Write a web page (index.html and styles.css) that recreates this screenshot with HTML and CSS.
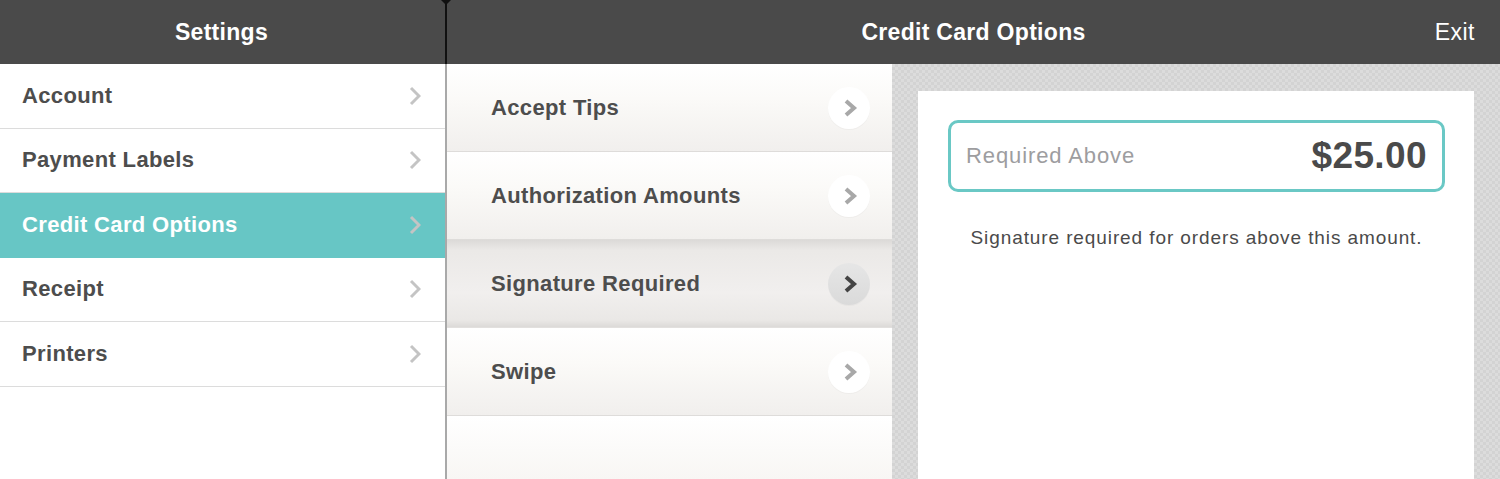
FILE: index.html
```html
<!DOCTYPE html>
<html>
<head>
<meta charset="utf-8">
<link rel="stylesheet" href="styles.css">
</head>
<body>
<div class="app">
  <header class="topbar">
    <div class="topbar-left">Settings</div>
    <div class="topbar-right">
      <span></span>
      <span class="title">Credit Card Options</span>
      <span class="exit">Exit</span>
    </div>
  </header>
  <main class="content">
    <nav class="menu">
      <div class="menu-row">Account<svg class="chev" viewBox="0 0 12 20"><path d="M2 2 L10 10 L2 18" /></svg></div>
      <div class="menu-row">Payment Labels<svg class="chev" viewBox="0 0 12 20"><path d="M2 2 L10 10 L2 18" /></svg></div>
      <div class="menu-row active">Credit Card Options<svg class="chev" viewBox="0 0 12 20"><path d="M2 2 L10 10 L2 18" /></svg></div>
      <div class="menu-row">Receipt<svg class="chev" viewBox="0 0 12 20"><path d="M2 2 L10 10 L2 18" /></svg></div>
      <div class="menu-row">Printers<svg class="chev" viewBox="0 0 12 20"><path d="M2 2 L10 10 L2 18" /></svg></div>
    </nav>
    <section class="options">
      <div class="opt-row"><span>Accept Tips</span><span class="circle"><svg viewBox="0 0 16 20"><path d="M4 3 L12 10 L4 17" /></svg></span></div>
      <div class="opt-row"><span>Authorization Amounts</span><span class="circle"><svg viewBox="0 0 16 20"><path d="M4 3 L12 10 L4 17" /></svg></span></div>
      <div class="opt-row selected"><span>Signature Required</span><span class="circle"><svg viewBox="0 0 16 20"><path d="M4 3 L12 10 L4 17" /></svg></span></div>
      <div class="opt-row"><span>Swipe</span><span class="circle"><svg viewBox="0 0 16 20"><path d="M4 3 L12 10 L4 17" /></svg></span></div>
      <div class="opt-fill"></div>
    </section>
    <section class="detail">
      <div class="card">
        <div class="field">
          <span class="field-label">Required Above</span>
          <span class="field-value">$25.00</span>
        </div>
        <p class="note">Signature required for orders above this amount.</p>
      </div>
    </section>
  </main>
</div>
</body>
</html>
```

FILE: styles.css
```css
* { box-sizing: border-box; }
html, body { margin: 0; padding: 0; }
body {
  width: 1500px;
  height: 479px;
  overflow: hidden;
  font-family: "Liberation Sans", Arial, sans-serif;
  background: #fff;
}
.app { display: flex; flex-direction: column; height: 479px; }

.topbar {
  display: flex;
  height: 64px;
  background: #4a4a4a;
  color: #fff;
  font-size: 23px;
  font-weight: bold;
  letter-spacing: 0.3px;
}
.topbar-left {
  position: relative;
  width: 447px;
  border-right: 2px solid #111;
  display: flex;
  align-items: center;
  justify-content: center;
  padding-right: 2px;
}
.topbar-left::after {
  content: "";
  position: absolute;
  top: 0;
  right: -6px;
  border-left: 5px solid transparent;
  border-right: 5px solid transparent;
  border-top: 5px solid #111;
}
.topbar-right {
  flex: 1;
  display: grid;
  grid-template-columns: 1fr auto 1fr;
  align-items: center;
}
.exit { justify-self: end; padding-right: 25px; font-weight: normal; letter-spacing: 0.5px; }

.content { flex: 1; display: flex; min-height: 0; }

.menu {
  width: 447px;
  border-right: 2px solid #a9a9a9;
  background: #fff;
}
.menu-row {
  height: 64.5px;
  display: flex;
  align-items: center;
  justify-content: space-between;
  padding: 0 24px 0 22px;
  border-bottom: 1px solid #dcdcdc;
  font-size: 22px;
  font-weight: bold;
  letter-spacing: 0.35px;
  color: #4d4d4d;
}
.menu-row.active { background: #67c6c5; color: #fff; border-bottom-color: #67c6c5; }
.chev { width: 12px; height: 20px; }
.chev path { fill: none; stroke: #c4c4c4; stroke-width: 3; }

.options {
  width: 445px;
  display: flex;
  flex-direction: column;
  background: #f6f4f2;
}
.opt-row {
  height: 88px;
  display: flex;
  align-items: center;
  justify-content: space-between;
  padding: 0 22px 0 44px;
  font-size: 22px;
  font-weight: bold;
  letter-spacing: 0.35px;
  color: #4d4d4d;
  background: linear-gradient(#ffffff, #fbfaf8 40%, #f1efed);
  border-bottom: 1px solid #dedcda;
}
.opt-row.selected {
  background: linear-gradient(#dcdad8, #ebe9e7 12%, #f1efee 60%, #eae8e6 92%, #dcdad8);
  border-bottom-color: #e2e0de;
}
.circle {
  width: 42px;
  height: 42px;
  border-radius: 50%;
  background: #ffffff;
  box-shadow: 0 1px 1px rgba(0, 0, 0, 0.03);
  display: flex;
  align-items: center;
  justify-content: center;
}
.circle svg { width: 16px; height: 20px; margin-left: 2px; }
.circle path { fill: none; stroke: #a8a8a8; stroke-width: 4; }
.selected .circle { background: linear-gradient(#e6e6e6, #dadada); }
.selected .circle path { stroke: #444; }
.opt-fill { flex: 1; background: linear-gradient(#ffffff, #f8f6f4); }

.detail {
  flex: 1;
  padding: 27px 26px 0 26px;
  background-color: #d7d7d7;
  background-image: repeating-conic-gradient(#d3d3d3 0 25%, #dcdcdc 0 50%);
  background-size: 6px 6px;
}
.card {
  height: 100%;
  background: #fff;
  padding: 29px 29px 0 30px;
}
.field {
  height: 72px;
  border: 3px solid #6ac8c5;
  border-radius: 10px;
  display: flex;
  align-items: center;
  justify-content: space-between;
  padding: 0 15px 0 15px;
}
.field-label { font-size: 22px; color: #9d9d9f; letter-spacing: 0.9px; }
.field-value { font-size: 37px; font-weight: bold; color: #4a4a4a; letter-spacing: 0.4px; }
.note {
  margin: 35px 0 0;
  text-align: center;
  font-size: 19px;
  letter-spacing: 0.9px;
  color: #4a4a4a;
}
```
